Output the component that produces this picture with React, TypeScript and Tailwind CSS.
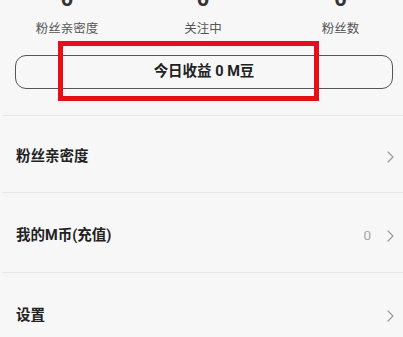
const stats = [
  { value: '0', label: '粉丝亲密度', cls: 'w-[134px]' },
  { value: '0', label: '关注中', cls: 'w-[134px] pl-[4px]' },
  { value: '0', label: '粉丝数', cls: 'flex-1 pl-[10px]' },
];

function Chevron() {
  return (
    <svg width="7" height="12" viewBox="0 0 7 12" fill="none" className="shrink-0">
      <polyline points="1,1 6,6 1,11" stroke="#9a9a9a" strokeWidth="1.2" strokeLinecap="round" strokeLinejoin="round" />
    </svg>
  );
}

function Row({ title, value, h }: { title: string; value?: string; h: string }) {
  return (
    <div className={`ml-[3px] flex items-center border-t border-[#e6e6e6] pl-[13px] pr-[9px] pt-[6px] ${h}`}>
      <span className="flex-1 text-[14.5px] font-bold text-[#222]">{title}</span>
      {value && <span className="mr-[16px] text-[13.5px] text-[#a5a5a5]">{value}</span>}
      <Chevron />
    </div>
  );
}

export default function App() {
  return (
    <div
      className="relative h-[337px] w-[403px] overflow-hidden bg-[#f7f7f7]"
      style={{ fontFamily: 'Roboto, "Noto Sans CJK SC", sans-serif' }}
    >
      {/* stats, numbers cut off by the top edge */}
      <div className="-mt-[11px] flex">
        {stats.map((s) => (
          <div key={s.label} className={`flex flex-col items-center ${s.cls}`}>
            <span className="text-[22px] leading-[20px] font-bold text-[#333]">{s.value}</span>
            <span className="mt-[12px] text-[12.5px] leading-[16px] text-[#555]">{s.label}</span>
          </div>
        ))}
      </div>

      {/* today's earnings */}
      <div className="mt-[18px] pl-[15px] pr-[10px]">
        <div className="flex h-[34px] items-center justify-center rounded-[11px] border border-[#555] text-[14.5px] font-bold text-[#222]">
          今日收益 0 M豆
        </div>
      </div>

      <div className="mt-[26px]">
        <Row title="粉丝亲密度" h="h-[77px]" />
        <Row title="我的M币(充值)" value="0" h="h-[80px]" />
        <Row title="设置" h="h-[80px]" />
      </div>

      {/* annotation box */}
      <div className="absolute left-[58px] top-[41px] h-[60px] w-[261px] border-[5px] border-[#e3101a]" />
    </div>
  );
}
